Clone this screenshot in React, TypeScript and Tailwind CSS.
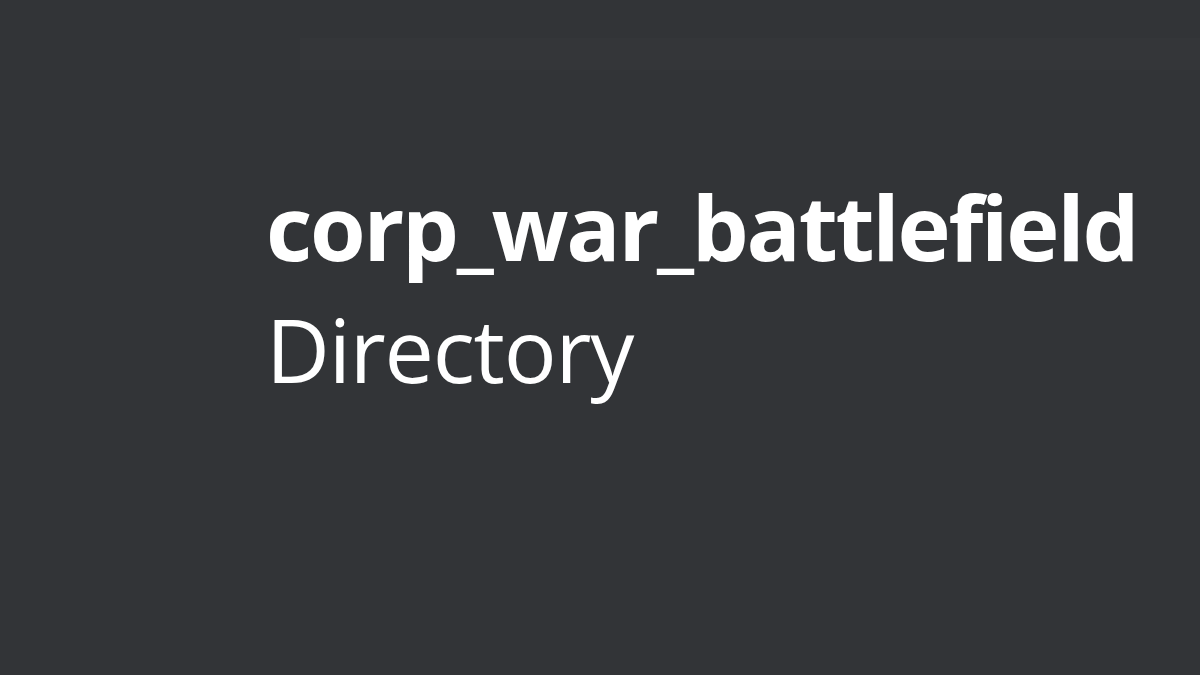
import React from 'react';

const App: React.FC = () => {
  return (
    <div className="w-[1200px] h-[675px] overflow-hidden bg-[#323437] flex flex-col" style={{ fontFamily: '"Open Sans", "Noto Sans", sans-serif' }}>
      {/* faint band at top */}
      <div className="mt-[38px] ml-[300px] h-[32px] bg-[#343639]" />
      {/* tooltip text */}
      <div className="pl-[266px] pt-[95px] flex flex-col text-white">
        <span className="text-[90px] leading-[123px] font-bold tracking-[-2.25px]">corp_war_battlefield</span>
        <span className="text-[88px] leading-[123px] font-normal tracking-[-1.2px]">Directory</span>
      </div>
    </div>
  );
};

export default App;
